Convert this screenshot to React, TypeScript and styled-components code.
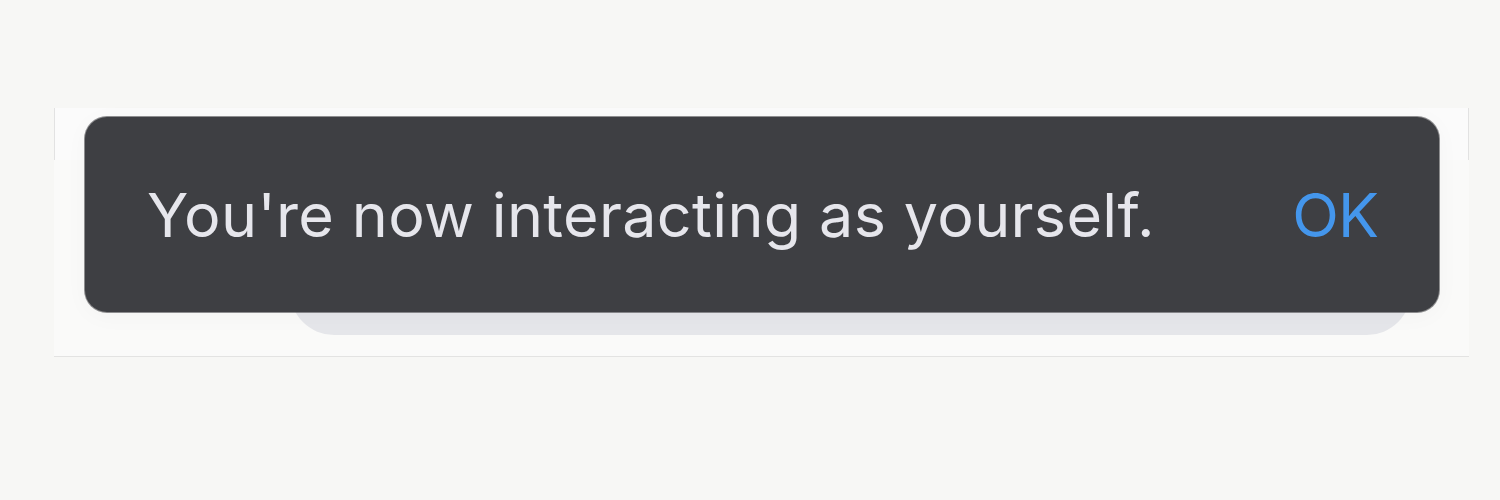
import * as React from 'react';
import styled, { createGlobalStyle } from 'styled-components';

const GlobalStyle = createGlobalStyle`
  html, body {
    margin: 0;
    padding: 0;
    background: #f7f7f5;
  }
  body {
    font-family: Inter, "Noto Sans", sans-serif;
    -webkit-font-smoothing: antialiased;
  }
`;

const Page = styled.div`
  width: 1500px;
  height: 500px;
  padding: 108px 31px 0 54px;
  box-sizing: border-box;
`;

const Sheet = styled.div`
  position: relative;
  height: 249px;
  background: #fafaf9;
  border-bottom: 1px solid #e3e3e2;
  box-sizing: border-box;
`;

const SheetBar = styled.div`
  height: 52px;
  background: #fbfbfb;
  border-left: 1px solid #e2e2e2;
  border-right: 1px solid #e2e2e2;
  box-sizing: border-box;
`;

// the next toast in the stack peeks out below the front one
const StackedToast = styled.div`
  position: absolute;
  left: 236px;
  right: 58px;
  top: 40px;
  bottom: 21px;
  background: #e5e6ea;
  border-radius: 44px;
`;

const Toast = styled.div`
  position: absolute;
  left: 31px;
  top: 9px;
  width: 1354px;
  height: 195px;
  padding: 0 61px 0 62px;
  box-sizing: border-box;
  display: flex;
  align-items: center;
  justify-content: space-between;
  background: #3e3f43;
  border-radius: 22px;
  box-shadow: 0 0 0 1px rgba(70, 70, 74, 0.6), 0 4px 24px rgba(0, 0, 0, 0.03);
`;

const Message = styled.span`
  font-size: 61px;
  font-weight: 440;
  color: #e6e6ec;
  letter-spacing: 0.35px;
`;

const Action = styled.button`
  border: 0;
  padding: 0;
  background: none;
  font-family: inherit;
  font-size: 61px;
  font-weight: 400;
  color: #4496ec;
  letter-spacing: -1px;
  cursor: pointer;
`;

export default function App() {
  return (
    <Page>
      <GlobalStyle />
      <Sheet>
        <SheetBar />
        <StackedToast />
        <Toast>
          <Message>You're now interacting as yourself.</Message>
          <Action>OK</Action>
        </Toast>
      </Sheet>
    </Page>
  );
}
